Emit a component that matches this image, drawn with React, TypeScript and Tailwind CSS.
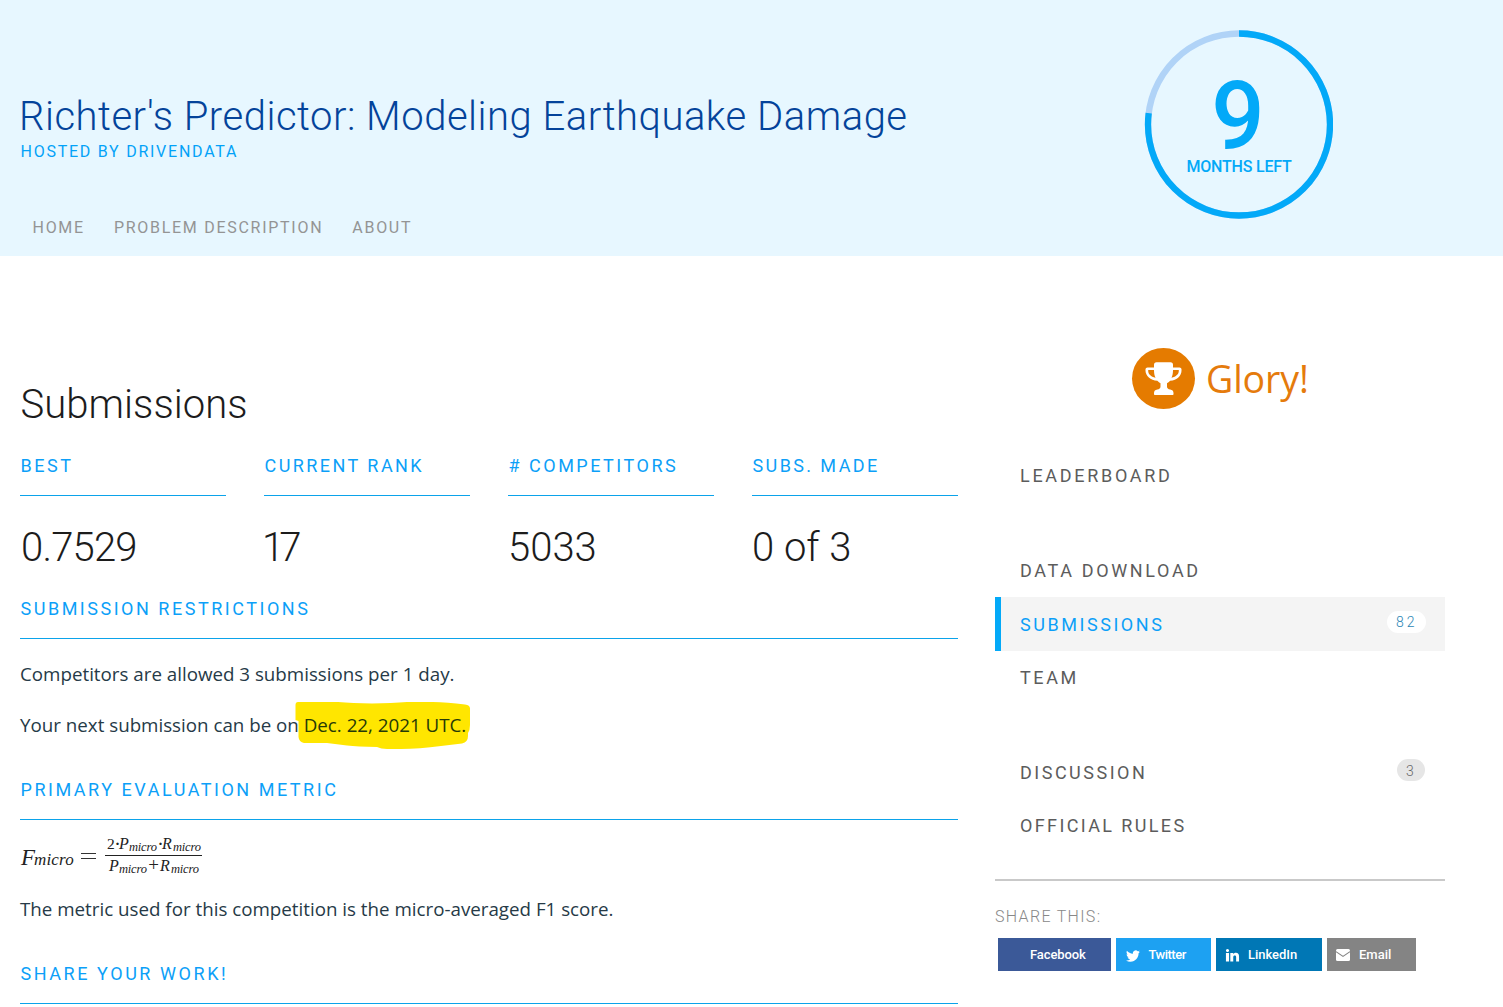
import React from "react";

const sans = "font-[Roboto,'Open_Sans',sans-serif]";
const body = "font-['Open_Sans','Noto_Sans',sans-serif]";
const serif = "font-['Liberation_Serif',serif]";

function Countdown() {
  return (
    <div className="relative mt-[30px] ml-[1144px] h-[189px] w-[189px]">
      <svg className="absolute inset-0" width="189" height="189" viewBox="0 0 189 189" fill="none" strokeWidth="6.3">
        <circle cx="95" cy="94.5" r="91" stroke="#b0d3f7" />
        <circle cx="95" cy="94.5" r="91" stroke="#03a9f8" pathLength="360" strokeDasharray="277.2 360" transform="rotate(-90 95 94.5)" />
      </svg>
      <div className="relative flex flex-col items-center text-[#03a9f8]">
        <span className="mt-[50px] h-[74px] pr-[1px] text-[94px] leading-[74px] font-medium">9</span>
        <span className="mt-[2px] h-[20px] pl-[1px] text-[16px] leading-[21px] font-medium tracking-[-0.2px]">MONTHS LEFT</span>
      </div>
    </div>
  );
}

function Section({ title, track, className = "" }: { title: string; track: string; className?: string }) {
  return (
    <h3 className={`h-[42px] border-b border-[#0ba3ea] pl-[0.5px] text-[18px] leading-[24px] whitespace-nowrap text-[#0c9ff8] ${track} ${className}`}>
      {title}
    </h3>
  );
}

const stats = [
  { label: "BEST", value: "0.7529", lt: "tracking-[2.5px]", vt: "tracking-[-0.8px] pl-px" },
  { label: "CURRENT RANK", value: "17", lt: "tracking-[2.45px]", vt: "tracking-[-5px] -ml-[2px]" },
  { label: "# COMPETITORS", value: "5033", lt: "tracking-[2.5px]", vt: "tracking-[0px]" },
  { label: "SUBS. MADE", value: "0 of 3", lt: "tracking-[2.4px]", vt: "tracking-[0px]" },
];

function Term({ letter, w }: { letter: string; w: string }) {
  return (
    <>
      <i className={`text-[16px] ${w}`}>{letter}</i>
      <i className="relative top-[2px] w-[28px] text-[12.5px] tracking-[-0.2px]">micro</i>
    </>
  );
}

function Formula() {
  return (
    <div className={`flex h-[77px] text-[#222] ${serif}`}>
      <i className="mt-[26px] w-[14px] pl-px text-[23px] leading-[24px]">F</i>
      <i className="mt-[28px] w-[47px] text-[17px] leading-[24px] tracking-[0.15px]">micro</i>
      <div className="mt-[33px] h-[6px] w-[15px] border-y border-[#333]" />
      <div className="ml-[9px] w-[97px]">
        <div className="mt-[15px] flex h-[20px] items-baseline pl-[2px] leading-[18px]">
          <span className="w-[8px] text-[15.5px]">2</span>
          <b className="w-[4px] text-[15px]">·</b>
          <Term letter="P" w="w-[10px]" />
          <b className="w-[5px] pl-[1px] text-[15px]">·</b>
          <Term letter="R" w="w-[11px]" />
        </div>
        <div className="h-px bg-[#222]" />
        <div className="flex h-[18px] items-baseline pl-[4px] leading-[18px]">
          <Term letter="P" w="w-[10px]" />
          <span className="w-[13px] text-center text-[19px]">+</span>
          <Term letter="R" w="w-[11px]" />
        </div>
      </div>
    </div>
  );
}

function MenuItem({ label, track, className = "", badge }: { label: string; track: string; className?: string; badge?: React.ReactNode }) {
  return (
    <li className={`flex h-[53px] items-start justify-between pt-[15px] pl-[25px] text-[18px] leading-[24px] text-[#5c5c5c] ${className}`}>
      <span className={track}>{label}</span>
      {badge}
    </li>
  );
}

function Trophy() {
  return (
    <div className="flex h-[61px] w-[63px] items-center justify-center rounded-[50%] bg-[#e57b00]">
      <svg width="37" height="34" viewBox="0 0 37 34" fill="#fff">
        <path d="M11.500.3h14q2.500 0 2.500 2.500v2.600h6.500q2 0 2 1.800v1.600c0 5-4.500 9.500-11.300 10-1.200 1.200-2.200 1.900-3.200 2.400v3.300c0 1.800 1.200 2.800 3.200 3 2.100.3 3.300 1.500 3.300 3.500v1.300c0 .5-.3.8-.8.8H9.800c-.5 0-.8-.3-.8-.8V31c0-2 1.200-3.200 3.300-3.500 2-.2 3.200-1.200 3.200-3v-3.300c-1-.5-2-1.200-3.200-2.400C5.500 18.300.5 13.800.5 8.800V7.200q0-1.800 2-1.800H9V2.800q0-2.500 2.500-2.500zM9 8H3.200v1c0 3 2.700 5.700 7.300 6.700C9.400 13.500 9 11 9 8zm19 0c0 3-.4 5.500-1.500 7.700 4.600-1 7.300-3.700 7.300-6.700V8z" />
      </svg>
    </div>
  );
}

function ShareButton({ label, className, icon, track }: { label: string; className: string; icon?: React.ReactNode; track: string }) {
  return (
    <a className={`flex h-[33px] items-center text-[13px] font-medium text-white ${className}`}>
      <span className="flex w-[32px] justify-start pl-[9px]">{icon}</span>
      <span className={track}>{label}</span>
    </a>
  );
}

export default function App() {
  return (
    <div className={`h-[1007px] w-[1503px] overflow-hidden bg-white ${sans}`}>
      <header className="relative h-[256px] bg-[#e7f7ff] pt-[96px] pl-[20px]">
        <h1 className="-ml-px h-[41px] text-[40px] leading-[41px] font-light tracking-[0.51px] whitespace-nowrap text-[#04439a]">
          Richter's Predictor: Modeling Earthquake Damage
        </h1>
        <p className="mt-[5px] h-[20px] pl-[0.5px] text-[16px] leading-[20px] tracking-[1.75px] text-[#03a2f8]">HOSTED BY DRIVENDATA</p>
        <nav className="mt-[56px] flex h-[20px] gap-[29px] pl-[12.500px] text-[16px] leading-[20px] tracking-[1.72px] text-[#949494]">
          <a>HOME</a>
          <a>PROBLEM DESCRIPTION</a>
          <a>ABOUT</a>
        </nav>
        <div className="absolute top-0 left-0">
          <Countdown />
        </div>
      </header>

      <div className="flex gap-[37px] pl-[20px]">
        <main className="w-[938px] pt-[123px]">
          <h2 className="h-[51px] pl-[0.5px] text-[40px] leading-[51px] font-light tracking-[0.05px] text-[#1c1c1c]">Submissions</h2>
          <div className="mt-[24px] grid grid-cols-4 gap-[38px]">
            {stats.map((s) => (
              <div key={s.label}>
                <Section title={s.label} track={s.lt} />
                <div className={`mt-[26px] h-[49px] text-[40px] leading-[51px] font-light text-[#1c1c1c] ${s.vt}`}>{s.value}</div>
              </div>
            ))}
          </div>
          <Section title="SUBMISSION RESTRICTIONS" track="tracking-[2.52px]" className="mt-[26px]" />
          <div className={`text-[18.75px] leading-[24px] whitespace-nowrap text-[#263a47] ${body}`}>
            <p className="mt-[23px]">Competitors are allowed 3 submissions per 1 day.</p>
            <p className="relative mt-[27px]">
              <svg className="absolute top-[-12px] left-[275px]" width="176" height="50" viewBox="0 0 176 50">
                <path d="M3 1h40q14 1.400 34 1.400T112 1h26q14 .200 32 2.600 5 .5 5 4V24q0 5-2 8v3q0 6-6 7.500L146 45q-22 3-40 3H92q-6 0-10-2-20-.5-30-1.500L32 42H9q-5-1-5.500-6V20l-3-1V4Q.5 1 3 1z" fill="#ffe600" />
              </svg>
              <span className="relative">
                Your next submission can be on <span className="text-[#263a07]">Dec. 22, 2021 UTC.</span>
              </span>
            </p>
          </div>
          <Section title="PRIMARY EVALUATION METRIC" track="tracking-[2.52px]" className="mt-[41px]" />
          <Formula />
          <p className={`text-[18.75px] leading-[24px] whitespace-nowrap text-[#263a47] ${body}`}>
            The metric used for this competition is the micro-averaged F1 score.
          </p>
          <Section title="SHARE YOUR WORK!" track="tracking-[2.56px]" className="mt-[41px]" />
        </main>

        <aside className="w-[450px] pt-[92px]">
          <div className="flex h-[61px] items-center pl-[137px]">
            <Trophy />
            <span className={`ml-[11px] text-[37.5px] leading-[61px] tracking-[-0.1px] text-[#e57b0c] ${body}`}>Glory!</span>
          </div>
          <ul className="mt-[40px]">
            <MenuItem label="LEADERBOARD" track="tracking-[2.7px]" />
            <MenuItem label="DATA DOWNLOAD" track="tracking-[2.65px]" className="mt-[42px]" />
            <MenuItem
              label="SUBMISSIONS"
              track="tracking-[2.55px] text-[#0c9ff8] pt-px"
              className="h-[54px] border-l-[6px] border-[#03a9f8] bg-[#f4f4f4] pr-[19px] !pl-[19px]"
              badge={<span className="-mt-px h-[22px] w-[39px] rounded-full bg-white pl-[9px] text-[14px] leading-[22px] font-light tracking-[2.900px] text-[#2c86b5]">82</span>}
            />
            <MenuItem label="TEAM" track="tracking-[2.6px]" />
            <MenuItem
              label="DISCUSSION"
              track="tracking-[2.5px]"
              className="mt-[42px] pr-[20px]"
              badge={<span className="-mt-[2px] h-[22px] w-[28px] rounded-full bg-[#e6e6e6] pl-[9px] text-[14px] leading-[24px] font-light text-[#666]">3</span>}
            />
            <MenuItem label="OFFICIAL RULES" track="tracking-[2.38px]" />
          </ul>
          <div className="mt-[27px] h-[2px] bg-[#c9c9c9]" />
          <p className="mt-[25px] h-[20px] text-[16px] leading-[21px] font-light tracking-[1.32px] text-[#888]">SHARE THIS:</p>
          <div className="mt-[12px] flex gap-[5px] pl-[3px]">
            <ShareButton label="Facebook" className="w-[113px] bg-[#3b5998]" track="tracking-[-0.1px]" />
            <ShareButton
              label="Twitter"
              className="w-[95px] bg-[#1da1f2]"
              track="tracking-[-0.5px] pl-[0.5px]"
              icon={
                <svg width="14" height="14" viewBox="0 0 24 24" fill="#fff" className="mt-[2px] ml-px">
                  <path d="M23.950 4.570a10 10 0 0 1-2.820.770 4.960 4.960 0 0 0 2.160-2.720c-.950.550-2 .950-3.130 1.180a4.920 4.920 0 0 0-8.380 4.480C7.690 8.090 4.070 6.130 1.640 3.160a4.820 4.820 0 0 0-.670 2.480c0 1.710.870 3.210 2.190 4.100a4.900 4.900 0 0 1-2.230-.620v.060a4.920 4.920 0 0 0 3.950 4.830 5 5 0 0 1-2.210.080 4.940 4.940 0 0 0 4.600 3.420A9.870 9.870 0 0 1 0 19.540a14 14 0 0 0 7.550 2.210c9.050 0 14-7.500 14-13.980 0-.210 0-.420-.020-.630a9.940 9.940 0 0 0 2.460-2.550z" />
                </svg>
              }
            />
            <ShareButton
              label="LinkedIn"
              className="w-[106px] bg-[#0077b5]"
              track="tracking-[-0.03px]"
              icon={
                <svg width="15" height="15" viewBox="0 0 24 24" fill="#fff" className="mt-[1px]">
                  <path d="M6.500 21.500h-5V8h5v13.500zM4 6.500C2.500 6.500 1.500 5.300 1.500 4S2.500 1.500 4 1.500c1.500 0 2.500 1.200 2.500 2.500S5.500 6.500 4 6.500zm18.500 15h-4.700v-7c0-1.600-.7-2.700-2.200-2.700-1.600 0-2.400 1.100-2.400 2.700v7H8.500V8h4.600v2c.7-1.400 2.300-2.300 4.400-2.300 3.300 0 5 2.100 5 5.700v8.100z" />
                </svg>
              }
            />
            <ShareButton
              label="Email"
              className="w-[89px] bg-[#848484]"
              track="tracking-[0px]"
              icon={
                <svg width="14" height="12" viewBox="0 0 14 12" className="mt-[1px]">
                  <rect width="14" height="12" rx="1.500" fill="#fff" />
                  <path d="M0 2.600 7 7.400l7-4.800" fill="none" stroke="#848484" strokeWidth="1.100" />
                </svg>
              }
            />
          </div>
        </aside>
      </div>
    </div>
  );
}
